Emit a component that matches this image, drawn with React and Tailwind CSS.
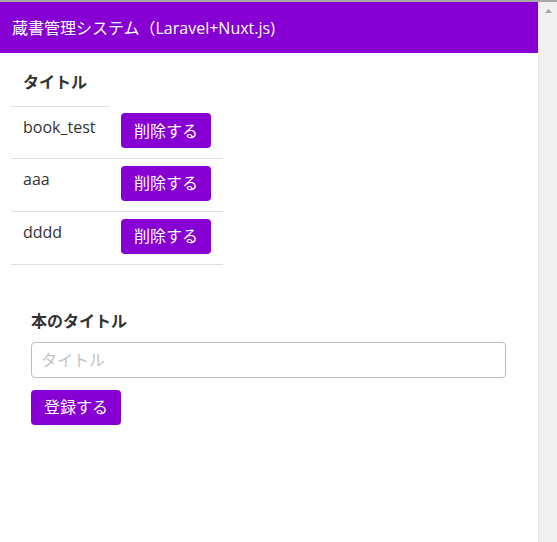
import React from 'react';

const font = { fontFamily: '"Open Sans", "Noto Sans CJK JP", sans-serif' };

const books = ['book_test', 'aaa', 'dddd'];

export default function App() {
  return (
    <div className="w-[557px] h-[542px] flex flex-col bg-white overflow-hidden" style={font}>
      {/* top edge */}
      <div className="h-[2px] bg-[#a9a9a9]" />
      <div className="flex flex-1">
        {/* page */}
        <div className="w-[538px] flex flex-col">
          <header className="h-[51px] bg-[#8700d3] flex items-center px-3 text-white text-[16px]">
            蔵書管理システム（Laravel+Nuxt.js)
          </header>

          {/* Book table */}
          <div className="pl-[11px] pt-[6px]">
            <table className="border-collapse text-[16px] text-[#333]">
              <thead>
                <tr>
                  <th className="w-[98px] h-[47px] px-3 text-left font-bold border-b border-[#dedede]">タイトル</th>
                  <th className="w-[114px]" />
                </tr>
              </thead>
              <tbody>
                {books.map((b, i) => (
                  <tr key={b} className="border-b border-[#dedede]">
                    <td className={`${i === 0 ? 'h-[52px]' : 'h-[53px]'} px-3 pt-[8px] align-top`}>{b}</td>
                    <td className="px-3 pt-[7px] align-top">
                      <button className="w-[90px] h-[35px] rounded bg-[#8700d3] text-white text-[16px]">
                        削除する
                      </button>
                    </td>
                  </tr>
                ))}
              </tbody>
            </table>
          </div>

          {/* Add form */}
          <div className="px-[31px] pt-[44px] w-[506px] box-content">
            <label className="block font-bold text-[16px] text-[#333] mb-[9px]">本のタイトル</label>
            <input
              type="text"
              placeholder="タイトル"
              className="w-[475px] h-[36px] px-[9px] border border-[#bdbdbd] rounded text-[16px] placeholder:text-[#c4c4c4] outline-none"
            />
            <button className="mt-3 w-[90px] h-[35px] rounded bg-[#8700d3] text-white text-[16px]">
              登録する
            </button>
          </div>
        </div>

        {/* scrollbar */}
        <div className="w-[19px] bg-[#f0f0f0] border-l border-[#e6e6e6] flex justify-center pt-[7px]">
          <svg width="7" height="4" viewBox="0 0 7 4">
            <path d="M3.5 0 L7 4 L0 4 Z" fill="#a3a3a3" />
          </svg>
        </div>
      </div>
    </div>
  );
}
